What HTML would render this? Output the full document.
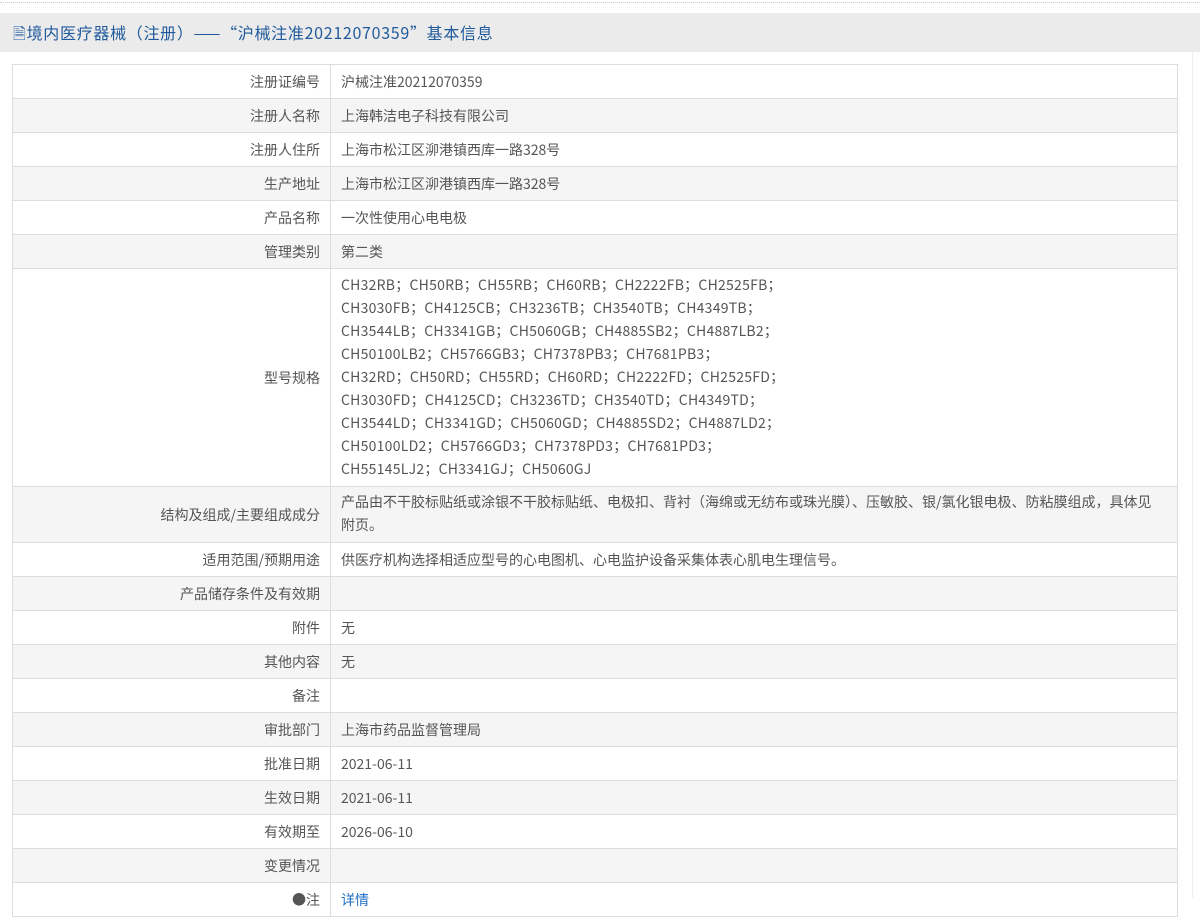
<!DOCTYPE html>
<html><head><meta charset="utf-8"><style>
*{margin:0;padding:0;box-sizing:border-box}
body{width:1200px;height:898px;overflow:hidden;background:#fff;font-family:"Noto Sans CJK SC","Liberation Sans",sans-serif;font-size:14px;color:#555;position:relative}
.dot{position:absolute;top:2px;left:0;width:1200px;border-top:1px dotted #ccc}
.hd{position:absolute;top:13px;left:0;width:1200px;height:39px;background:#ebebeb;color:#1f5a9c;font-size:16px;line-height:39px;padding-left:13px;white-space:nowrap;letter-spacing:0.7px}
.vr{position:absolute;left:1192px;top:52px;width:1px;height:846px;background:#eee}
table{position:absolute;top:64px;left:12px;width:1166px;border-collapse:collapse;table-layout:fixed}
td{border:1px solid #ddd;height:34px;padding:0 10px;vertical-align:middle;line-height:20px;overflow:hidden}
td.l{width:318px;text-align:right;color:#555;white-space:nowrap}
tr:nth-child(even) td{background:#f5f5f5}
.m{padding:4px 10px 5px;line-height:23px}
.s{letter-spacing:0.25px}
a{color:#1e6fc4;text-decoration:none}
</style></head><body>
<div class="dot"></div>
<div class="hd">🗎境内医疗器械（注册）——“沪械注准20212070359”基本信息</div>
<div class="vr"></div>
<table>
<tr><td class="l">注册证编号</td><td>沪械注准20212070359</td></tr>
<tr><td class="l">注册人名称</td><td>上海韩洁电子科技有限公司</td></tr>
<tr><td class="l">注册人住所</td><td>上海市松江区泖港镇西库一路328号</td></tr>
<tr><td class="l">生产地址</td><td>上海市松江区泖港镇西库一路328号</td></tr>
<tr><td class="l">产品名称</td><td>一次性使用心电电极</td></tr>
<tr><td class="l">管理类别</td><td>第二类</td></tr>
<tr><td class="l">型号规格</td><td class="m s" style="height:218px">CH32RB；CH50RB；CH55RB；CH60RB；CH2222FB；CH2525FB；<br>CH3030FB；CH4125CB；CH3236TB；CH3540TB；CH4349TB；<br>CH3544LB；CH3341GB；CH5060GB；CH4885SB2；CH4887LB2；<br>CH50100LB2；CH5766GB3；CH7378PB3；CH7681PB3；<br>CH32RD；CH50RD；CH55RD；CH60RD；CH2222FD；CH2525FD；<br>CH3030FD；CH4125CD；CH3236TD；CH3540TD；CH4349TD；<br>CH3544LD；CH3341GD；CH5060GD；CH4885SD2；CH4887LD2；<br>CH50100LD2；CH5766GD3；CH7378PD3；CH7681PD3；<br>CH55145LJ2；CH3341GJ；CH5060GJ</td></tr>
<tr><td class="l">结构及组成/主要组成成分</td><td class="m" style="height:56px">产品由不干胶标贴纸或涂银不干胶标贴纸、电极扣、背衬（海绵或无纺布或珠光膜）、压敏胶、银/氯化银电极、防粘膜组成，具体见<br>附页。</td></tr>
<tr><td class="l">适用范围/预期用途</td><td>供医疗机构选择相适应型号的心电图机、心电监护设备采集体表心肌电生理信号。</td></tr>
<tr><td class="l">产品储存条件及有效期</td><td></td></tr>
<tr><td class="l">附件</td><td>无</td></tr>
<tr><td class="l">其他内容</td><td>无</td></tr>
<tr><td class="l">备注</td><td></td></tr>
<tr><td class="l">审批部门</td><td>上海市药品监督管理局</td></tr>
<tr><td class="l">批准日期</td><td>2021-06-11</td></tr>
<tr><td class="l">生效日期</td><td>2021-06-11</td></tr>
<tr><td class="l">有效期至</td><td>2026-06-10</td></tr>
<tr><td class="l">变更情况</td><td></td></tr>
<tr><td class="l">●注</td><td><a>详情</a></td></tr>
</table>
</body></html>
